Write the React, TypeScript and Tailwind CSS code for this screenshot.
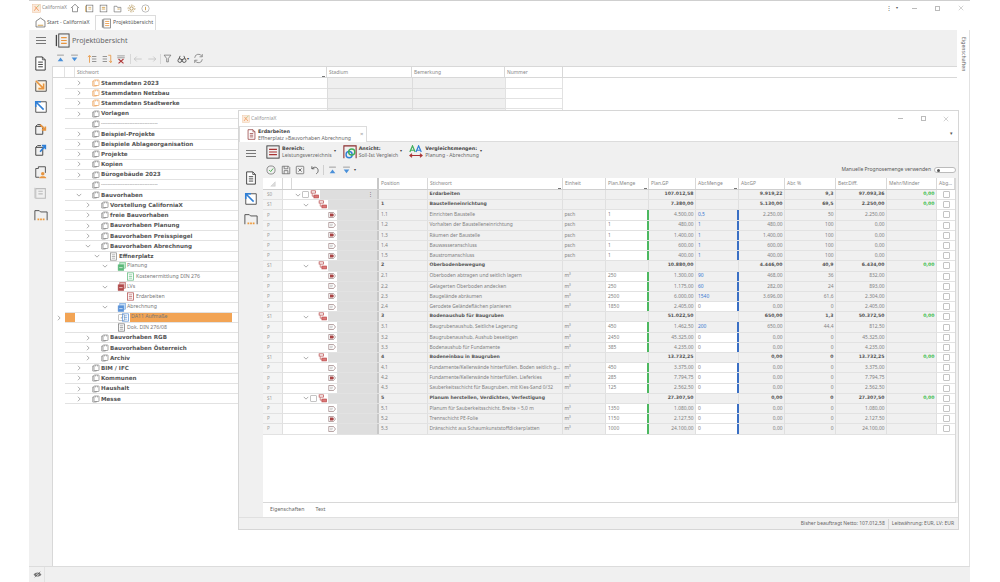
import React from "react";

type IP = { s?: number; h?: number; c?: string; f?: string };
const Svg = ({ s = 10, h, children, className }: { s?: number; h?: number; children: React.ReactNode; className?: string }) => (
  <svg width={s} height={h ?? s} viewBox="0 0 16 16" fill="none" className={"shrink-0 " + (className ?? "")}>{children}</svg>
);
const Logo = ({ s = 9 }: IP) => (
  <Svg s={s}><rect x="1" y="1" width="14" height="14" fill="#fbe9da" stroke="#eec7a6" /><path d="M4 12 L9 5 M5 4 L12 12" stroke="#ef9a5e" strokeWidth="1.6" /><path d="M9 5 L13 2" stroke="#8fc07a" strokeWidth="1.3" /></Svg>
);
const Chev = ({ down }: { down?: boolean }) => (
  <Svg s={6}>{down ? <path d="M2 5 L8 11 L14 5" stroke="#777" strokeWidth="1.6" /> : <path d="M5 2 L11 8 L5 14" stroke="#777" strokeWidth="1.6" />}</Svg>
);
const Folder = ({ c = "#888" }: IP) => (
  <Svg s={8}><rect x="4" y="2" width="10" height="11" rx="1" stroke={c} strokeWidth="1.5" /><path d="M4 4 H1.5 V14 H9 V13" stroke={c} strokeWidth="1.5" /><path d="M7 2 V5 M11 2 V5" stroke={c} strokeWidth="1.1" /></Svg>
);
const DocSmall = ({ c = "#888" }: IP) => (
  <Svg s={9}><rect x="2.5" y="1.5" width="11" height="13" stroke={c} strokeWidth="1.3" /><path d="M5 5 H11 M5 8 H11 M5 11 H11" stroke={c} strokeWidth="1.1" /></Svg>
);
const Stack = ({ c = "#5cb87a", l = "#c4ebcf" }: { c?: string; l?: string }) => (
  <Svg s={9}><rect x="5" y="1" width="10" height="10" fill={l} stroke={c} /><rect x="2" y="5" width="10" height="10" fill={c} stroke={c} /><path d="M4 10 H10" stroke="#fff" strokeWidth="1.2" /></Svg>
);
const PageDoc = ({ s = 15, c = "#333" }: IP) => (
  <Svg s={s}><path d="M3 1 H10 L13 4 V15 H3 Z" stroke={c} strokeWidth="1" fill="#fff" /><path d="M10 1 V4 H13" stroke={c} strokeWidth=".8" /><path d="M5.5 6.5 H10.5 M5.5 9 H10.5 M5.5 11.5 H10.5" stroke={c} strokeWidth="1" /></Svg>
);
const ArrowBox = ({ s = 15, dir, c }: { s?: number; dir: "in" | "out"; c: string }) => (
  <Svg s={s}>
    <path d="M4 2 H14 V14 H2 V4" stroke="#444" strokeWidth="1" fill={dir === "in" ? "#fdf3e3" : "#fff"} />
    {dir === "in" ? <path d="M2 2 L11 11 M11 5 V11 H5" stroke={c} strokeWidth="1.8" /> : <path d="M11 11 L2 2 M2 8 V2 H8" stroke={c} strokeWidth="1.8" />}
  </Svg>
);
const PlusFolder = ({ s = 15, up, c }: { s?: number; up?: boolean; c: string }) => (
  <Svg s={s}>
    <path d="M2 5 H10 V14 H2 Z M2 5 L4 3 H8" stroke="#444" strokeWidth="1.1" />
    {up ? <path d="M7 10 L13 3 M9 3 H13 V7" stroke={c} strokeWidth="1.8" /> : <path d="M7 3 L13 9 M13 5 V9 H9" stroke={c} strokeWidth="1.8" />}
  </Svg>
);
const DotFolder = ({ s = 15 }: IP) => (
  <Svg s={s}>
    <path d="M1 14 V3 H6 L7.5 4.5 H15 V14" stroke="#444" strokeWidth="1" />
    <path d="M4 13 H6 M7 13 H9 M10 13 H12" stroke="#ef9a3a" strokeWidth="2.2" />
  </Svg>
);
const Burger = () => (
  <div className="flex w-[10px] flex-col gap-[2px]">
    <div className="h-px bg-[#777]" /><div className="h-px bg-[#777]" /><div className="h-px bg-[#777]" />
  </div>
);
const Up = ({ flip }: { flip?: boolean }) => (
  <Svg s={9}>
    {flip ? <><path d="M2 2 H14" stroke="#888" strokeWidth="1.4" /><path d="M3 6 H13 L8 13 Z" fill="#4a90d9" /></> : <><path d="M2 2 H14" stroke="#888" strokeWidth="1.4" /><path d="M8 6 L13 13 H3 Z" fill="#4a90d9" /></>}
  </Svg>
);
const NodeIcon = () => (
  <Svg s={9}><rect x="2" y="1.5" width="8" height="4" stroke="#b84a4a" strokeWidth="1.3" /><path d="M4 6 V11 H7" stroke="#b84a4a" strokeWidth="1.1" /><rect x="7" y="9" width="8" height="5" stroke="#b84a4a" strokeWidth="1.3" fill="#d77" /></Svg>
);
const Tag = ({ filled }: { filled?: boolean }) => (
  <Svg s={8}><path d="M1.5 3 H11 L15 8 L11 13 H1.5 Z" stroke="#8a6a6a" strokeWidth="1.2" fill="#fff" />{filled ? <path d="M4 5 H10 L12 8 L10 11 H4 Z" fill="#a84242" /> : <path d="M4 6.5 H10 M4 9.5 H9" stroke="#aaa" strokeWidth="1.2" />}</Svg>
);
const Check = ({ on }: { on?: boolean }) => (
  <div className="flex h-[7px] w-[7px] shrink-0 items-center justify-center rounded-[1px] border border-[#c4c4c4] bg-white text-[5px] leading-none text-[#888]">{on ? "✓" : ""}</div>
);

type TR = { d: number; t: string; b?: boolean; chev?: "r" | "d"; icon?: "o" | "f" | "doc" | "g" | "gd" | "r" | "rd" | "bl" | "bd" | "k"; small?: boolean; sel?: boolean };
const tree: TR[] = [
  { d: 0, t: "Stammdaten 2023", b: true, chev: "r", icon: "o" },
  { d: 0, t: "Stammdaten Netzbau", b: true, chev: "r", icon: "o" },
  { d: 0, t: "Stammdaten Stadtwerke", b: true, chev: "r", icon: "o" },
  { d: 0, t: "Vorlagen", b: true, chev: "r", icon: "f" },
  { d: 0, t: "----------------------------------", icon: "f", small: true },
  { d: 0, t: "Beispiel-Projekte", b: true, chev: "r", icon: "f" },
  { d: 0, t: "Beispiele Ablageorganisation", b: true, chev: "r", icon: "f" },
  { d: 0, t: "Projekte", b: true, chev: "r", icon: "f" },
  { d: 0, t: "Kopien", b: true, chev: "r", icon: "f" },
  { d: 0, t: "Bürogebäude 2023", b: true, chev: "r", icon: "f" },
  { d: 0, t: "----------------------------------", icon: "f", small: true },
  { d: 0, t: "Bauvorhaben", b: true, chev: "d", icon: "f" },
  { d: 1, t: "Vorstellung CaliforniaX", b: true, chev: "r", icon: "f" },
  { d: 1, t: "freie Bauvorhaben", b: true, chev: "r", icon: "f" },
  { d: 1, t: "Bauvorhaben Planung", b: true, chev: "r", icon: "f" },
  { d: 1, t: "Bauvorhaben Preisspiegel", b: true, chev: "r", icon: "f" },
  { d: 1, t: "Bauvorhaben Abrechnung", b: true, chev: "d", icon: "f" },
  { d: 2, t: "Effnerplatz", b: true, chev: "d", icon: "doc" },
  { d: 3, t: "Planung", chev: "d", icon: "g", small: true },
  { d: 4, t: "Kostenermittlung DIN 276", icon: "gd", small: true },
  { d: 3, t: "LVs", chev: "d", icon: "r", small: true },
  { d: 4, t: "Erdarbeiten", icon: "rd", small: true },
  { d: 3, t: "Abrechnung", chev: "d", icon: "bl", small: true },
  { d: 4, t: "DA11 Aufmaße", icon: "bd", small: true, sel: true },
  { d: 3, t: "Dok. DIN 276/08", icon: "k", small: true },
  { d: 1, t: "Bauvorhaben RGB", b: true, chev: "r", icon: "f" },
  { d: 1, t: "Bauvorhaben Österreich", b: true, chev: "r", icon: "f" },
  { d: 1, t: "Archiv", b: true, chev: "r", icon: "f" },
  { d: 0, t: "BIM / IFC", b: true, chev: "r", icon: "f" },
  { d: 0, t: "Kommunen", b: true, chev: "r", icon: "f" },
  { d: 0, t: "Haushalt", b: true, chev: "r", icon: "f" },
  { d: 0, t: "Messe", b: true, chev: "r", icon: "f" },
];
const indents = ["pl-[1px]", "pl-[10px]", "pl-[19px]", "pl-[27px]", "pl-[36px]"];

const TreeIcon = ({ k }: { k?: TR["icon"] }) => {
  switch (k) {
    case "o": return <Folder c="#eca45e" />;
    case "f": return <Folder />;
    case "doc": return <DocSmall c="#888" />;
    case "g": return <Stack />;
    case "gd": return <DocSmall c="#5cb87a" />;
    case "r": return <Stack c="#b04a4a" l="#e6c0c0" />;
    case "rd": return <DocSmall c="#b04a4a" />;
    case "bl": return <Stack c="#5a92d8" l="#c4dcf4" />;
    case "bd": return <DocSmall c="#5a92d8" />;
    case "k": return <DocSmall c="#777" />;
    default: return null;
  }
};

const TreeRow = ({ r, i }: { r: TR; i: number }) => (
  <div className="flex h-[10.2px] w-[510px]">
    <div className="flex w-[12px] items-center justify-center">{r.sel ? <Chev /> : null}</div>
    <div className={"w-[10px] border-b border-[#e2e2e2] " + (r.sel ? "bg-[#f2a455]" : "")} />
    <div className={"flex w-[252px] items-center border-b border-[#e2e2e2] " + indents[r.d]}>
      <div className="flex w-[5px] shrink-0 justify-center">{r.chev ? <Chev down={r.chev === "d"} /> : null}</div>
      {r.sel ? <div className="ml-[1px] -mr-[5px] flex w-[8px] justify-end"><Check on /></div> : <div className="w-[9px]" />}
      <div className="ml-[1px] flex w-[9px] justify-center"><TreeIcon k={r.icon} /></div>
      <div className={"flex h-full items-center whitespace-nowrap pl-[1px] " + (r.sel ? "w-[102px] bg-[#f2a455] " : "") + (r.b ? "font-['DejaVu_Sans'] text-[5.6px] font-bold text-[#555]" : "text-[5.2px] text-[#777]")}>{r.t}</div>
    </div>
    <div className={"w-[85px] border-b border-l border-[#dcdcdc] " + (i < 4 ? "bg-[#efefef]" : "")} />
    <div className={"w-[93px] border-b border-l border-[#dcdcdc] " + (i < 4 ? "bg-[#efefef]" : "")} />
    <div className="w-[58px] border-b border-l border-r border-[#e2e2e2]" />
  </div>
);

type Row = { k: "S0" | "S1" | "P"; pos: string; t: string; e?: string; pm?: string; pg: string; am?: string; ag: string; ap: string; bd: string; mm?: string; f?: boolean; cb?: boolean };
const P = (pos: string, t: string, e: string, pm: string, pg: string, am: string, ag: string, ap: string, bd: string, f?: boolean): Row => ({ k: "P", pos, t, e, pm, pg, am, ag, ap, bd, f });
const S = (pos: string, t: string, pg: string, ag: string, ap: string, bd: string, cb?: boolean): Row => ({ k: "S1", pos, t, pg, ag, ap, bd, mm: "0,00", cb });
const rows: Row[] = [
  { k: "S0", pos: "", t: "Erdarbeiten", pg: "107.012,58", ag: "9.919,22", ap: "9,3", bd: "97.093,36", mm: "0,00", cb: true },
  S("1", "Baustelleneinrichtung", "7.380,00", "5.130,00", "69,5", "2.250,00"),
  P("1.1", "Einrichten Baustelle", "psch", "1", "4.500,00", "0,5", "2.250,00", "50", "2.250,00", true),
  P("1.2", "Vorhalten der Baustelleneinrichtung", "psch", "1", "480,00", "1", "480,00", "100", "0,00"),
  P("1.3", "Räumen der Baustelle", "psch", "1", "1.400,00", "1", "1.400,00", "100", "0,00", true),
  P("1.4", "Bauwasseranschluss", "psch", "1", "600,00", "1", "600,00", "100", "0,00"),
  P("1.5", "Baustromanschluss", "psch", "1", "400,00", "1", "400,00", "100", "0,00", true),
  S("2", "Oberbodenbewegung", "10.880,00", "4.446,00", "40,9", "6.434,00"),
  P("2.1", "Oberboden abtragen und seitlich lagern", "m³", "250", "1.300,00", "90", "468,00", "36", "832,00", true),
  P("2.2", "Gelagerten Oberboden andecken", "m³", "250", "1.175,00", "60", "282,00", "24", "893,00"),
  P("2.3", "Baugelände abräumen", "m³", "2500", "6.000,00", "1540", "3.696,00", "61,6", "2.304,00", true),
  P("2.4", "Gerodete Geländeflächen planieren", "m³", "1850", "2.405,00", "0", "0,00", "0", "2.405,00"),
  S("3", "Bodenaushub für Baugruben", "51.022,50", "650,00", "1,3", "50.372,50"),
  P("3.1", "Baugrubenaushub, Seitliche Lagerung", "m³", "450", "1.462,50", "200", "650,00", "44,4", "812,50"),
  P("3.2", "Baugrubenaushub, Aushub beseitigen", "m³", "2450", "45.325,00", "0", "0,00", "0", "45.325,00", true),
  P("3.3", "Bodenaushub für Fundamente", "m³", "385", "4.235,00", "0", "0,00", "0", "4.235,00"),
  S("4", "Bodeneinbau in Baugruben", "13.732,25", "0,00", "0", "13.732,25"),
  P("4.1", "Fundamente/Kellerwände hinterfüllen. Boden seitlich g...", "m³", "450", "3.375,00", "0", "0,00", "0", "3.375,00"),
  P("4.2", "Fundamente/Kellerwände hinterfüllen. Lieferkies", "m³", "285", "7.794,75", "0", "0,00", "0", "7.794,75", true),
  P("4.3", "Sauberkeitsschicht für Baugruben, mit Kies-Sand 0/32", "m³", "125", "2.562,50", "0", "0,00", "0", "2.562,50"),
  S("5", "Planum herstellen, Verdichten, Verfestigung", "27.307,50", "0,00", "0", "27.307,50", true),
  P("5.1", "Planum für Sauberkeitsschicht. Breite > 5,0 m", "m³", "1350", "1.080,00", "0", "0,00", "0", "1.080,00"),
  P("5.2", "Trennschicht PE-Folie", "m³", "1150", "2.127,50", "0", "0,00", "0", "2.127,50", true),
  P("5.3", "Dränschicht aus Schaumkunststoffdickerplatten", "m³", "1000", "24.100,00", "0", "0,00", "0", "24.100,00"),
];

const cellB = "flex items-center border-r border-[#e0e0e0] overflow-hidden whitespace-nowrap";
const boldT = "font-['DejaVu_Sans'] font-bold text-[4.6px] text-[#555]";
const normT = "text-[4.9px] text-[#808080]";

const GridRow = ({ r }: { r: Row }) => {
  const isP = r.k === "P";
  const t = isP ? normT : boldT;
  const white = isP && r.am === "0";
  return (
    <div className="flex h-[10.2px] border-b border-[#e2e2e2]">
      <div className="flex w-[20px] items-center border-r border-[#e0e0e0] bg-[#f4f4f4] pl-[4px] text-[4.6px] text-[#999]">{r.k === "P" ? "P" : r.k}</div>
      <div className="w-[9px] bg-white" />
      <div className="flex w-[87px] border-r-2 border-[#c8c8c8]">
        <div className={"flex items-center justify-end bg-white pr-[1px] " + (r.k === "S0" ? "w-[28px]" : r.k === "S1" ? "w-[36px]" : "w-[45px]")}>
          {isP ? <Tag filled={r.f} /> : (
            <div className="flex items-center gap-[1px]">
              <Chev down />
              {r.cb ? <Check /> : <div className="w-[7px]" />}
              <NodeIcon />
            </div>
          )}
        </div>
        <div className="flex flex-1 items-center justify-end bg-[#dedede] pr-[4px] text-[5px] leading-none text-[#666]">{r.k === "S0" ? "⋮" : ""}</div>
      </div>
      <div className={"w-[49px] bg-[#f0f0f0] pl-[2px] " + cellB + " " + (isP ? "text-[4.9px] text-[#808080]" : boldT)}>{r.pos}</div>
      <div className={"w-[135px] bg-[#f0f0f0] pl-[1.5px] " + cellB + " " + t}>{r.t}</div>
      <div className={"w-[43px] bg-[#f0f0f0] pl-[1.5px] " + cellB + " text-[4.9px] text-[#808080]"}>{r.e}</div>
      <div className={"w-[43px] pl-[2px] " + cellB + " text-[4.9px] text-[#808080] " + (isP ? "border-r-2 border-r-[#4cb860] bg-white" : "bg-[#f0f0f0]")}>{r.pm}</div>
      <div className={"w-[47px] justify-end bg-[#f0f0f0] pr-[1.5px] " + cellB + " " + t}>{r.pg}</div>
      <div className={"w-[43px] pl-[2px] " + cellB + " text-[4.9px] " + (isP ? "border-r-2 border-r-[#3a6fc4] " : "") + (white ? "bg-white text-[#808080]" : "bg-[#f0f0f0] text-[#3a78d0]")}>{r.am}</div>
      <div className={"w-[46px] justify-end bg-[#f0f0f0] pr-[1.5px] " + cellB + " " + t}>{r.ag}</div>
      <div className={"w-[51px] justify-end bg-[#f0f0f0] pr-[1.5px] " + cellB + " " + t}>{r.ap}</div>
      <div className={"w-[51px] justify-end bg-[#f0f0f0] pr-[1.5px] " + cellB + " " + t}>{r.bd}</div>
      <div className={"w-[50px] justify-end bg-[#f0f0f0] pr-[1.5px] " + cellB + " font-['DejaVu_Sans'] text-[4.6px] font-bold text-[#3fbf4f]"}>{r.mm}</div>
      <div className="flex w-[18px] items-center justify-center bg-white"><Check /></div>
    </div>
  );
};

const Hd = ({ w, t, mark }: { w: string; t: string; mark?: boolean }) => (
  <div className={"relative flex h-full items-center border-r border-[#d8d8d8] pl-[2px] text-[4.9px] text-[#888] " + w}>
    {t}
    {mark ? <span className="absolute bottom-0 right-[1px] h-px w-[3px] bg-[#777]" /> : null}
  </div>
);

const WinControls = () => (
  <div className="flex items-center">
    <div className="h-px w-[5px] bg-[#bbb]" />
    <div className="ml-[18px] h-[5px] w-[5px] border border-[#bbb]" />
    <Svg s={6} className="ml-[17px]"><path d="M2 2 L14 14 M14 2 L2 14" stroke="#aaa" strokeWidth="1.4" /></Svg>
  </div>
);

const TbIcon = ({ children }: { children: React.ReactNode }) => <div className="flex w-[14.5px] shrink-0 justify-center">{children}</div>;

const FloatingWindow = () => (
  <div className="absolute left-[209px] top-[110px] flex h-[420px] w-[721px] flex-col border border-[#d6d6d6] bg-white">
    <div className="flex h-[15px] shrink-0 items-center pl-[3px] pr-[9px]">
      <Logo s={8} />
      <span className="ml-[1px] text-[5px] text-[#999]">CaliforniaX</span>
      <div className="ml-auto"><WinControls /></div>
    </div>
    <div className="flex h-[16px] shrink-0 border-b border-[#dcdcdc]">
      <div className="flex h-[16px] w-[128px] items-center border border-b-0 border-[#dcdcdc] bg-white pl-[6px]">
        <PageDoc s={11} c="#8a2b2b" />
        <div className="ml-[1px] leading-[6px]">
          <div className="font-['DejaVu_Sans'] text-[4.8px] font-bold text-[#444]">Erdarbeiten</div>
          <div className="text-[5.1px] text-[#666]">Effnerplatz »Bauvorhaben Abrechnung</div>
        </div>
        <span className="ml-[9px] text-[6px] text-[#999]">×</span>
      </div>
      <div className="ml-auto self-center pr-[5px] text-[5px] leading-none text-[#555]">▾</div>
    </div>
    <div className="flex min-h-0 flex-1 bg-[#f0f0f0]">
      <div className="flex w-[24px] shrink-0 flex-col items-center pt-[8px]">
        <Burger />
        <div className="mt-[14px] flex flex-col items-center gap-[6.5px]">
          <PageDoc s={14} />
          <ArrowBox s={14} dir="out" c="#2f7fd6" />
          <DotFolder s={14} />
        </div>
      </div>
      <div className="flex min-w-0 flex-1 flex-col">
        <div className="flex h-[20px] shrink-0 items-center pl-[3px]">
          <Svg s={14}><rect x="1" y="1" width="14" height="14" stroke="#333" strokeWidth="1" /><path d="M3.5 5 H12.5 M3.5 8 H12.5 M3.5 11 H12.5" stroke="#a83232" strokeWidth="1.3" /></Svg>
          <div className="ml-[2px] leading-[6px]">
            <div className="font-['DejaVu_Sans'] text-[4.8px] font-bold text-[#444]">Bereich:</div>
            <div className="text-[5.1px] text-[#666]">Leistungsverzeichnis</div>
          </div>
          <span className="ml-[2px] -mt-[3px] text-[4px] text-[#444]">▾</span>
          <div className="ml-[7px]">
            <Svg s={14}><path d="M1 15 V1 H15 V15" stroke="#8a2b2b" strokeWidth="1.2" /><circle cx="7" cy="11" r="3.5" stroke="#2f7fd6" strokeWidth="1.6" /><circle cx="10" cy="8" r="3.5" stroke="#3fae5a" strokeWidth="1.6" /></Svg>
          </div>
          <div className="ml-[2px] leading-[6px]">
            <div className="font-['DejaVu_Sans'] text-[4.8px] font-bold text-[#444]">Ansicht:</div>
            <div className="text-[5.1px] text-[#666]">Soll-Ist Vergleich</div>
          </div>
          <span className="ml-[2px] -mt-[3px] text-[4px] text-[#444]">▾</span>
          <div className="ml-[7px]">
            <Svg s={14}><path d="M1 8 L4 1 L7 8 M2 6 H6" stroke="#3fae5a" strokeWidth="1.4" /><path d="M8 8 L11 1 L14 8 M9 6 H13" stroke="#2f7fd6" strokeWidth="1.4" /><path d="M1 12 H15 M3.5 10 L1 12 L3.5 14 M12.5 10 L15 12 L12.5 14" stroke="#a83232" strokeWidth="1.2" /></Svg>
          </div>
          <div className="ml-[2px] leading-[6px]">
            <div className="font-['DejaVu_Sans'] text-[4.8px] font-bold text-[#444]">Vergleichsmengen:</div>
            <div className="text-[5.1px] text-[#666]">Planung - Abrechnung</div>
          </div>
          <span className="ml-[1px] -mt-[3px] text-[4px] text-[#444]">▾</span>
        </div>
        <div className="flex h-[16px] shrink-0 items-center pl-[1px] pr-[2px]">
          <TbIcon><Svg s={10}><circle cx="8" cy="8" r="6.5" stroke="#777" strokeWidth="1.3" /><path d="M5 8 L7.5 10.5 L11.5 5.5" stroke="#4caf50" strokeWidth="1.5" /></Svg></TbIcon>
          <TbIcon><Svg s={10}><path d="M2 2 H12 L14 4 V14 H2 Z M5 2 V6 H11 V2 M5 14 V9 H11 V14" stroke="#666" strokeWidth="1.2" /></Svg></TbIcon>
          <TbIcon><Svg s={10}><rect x="2" y="2" width="12" height="12" rx="1" stroke="#666" strokeWidth="1.2" /><path d="M5.5 5.5 L10.5 10.5 M10.5 5.5 L5.5 10.5" stroke="#555" strokeWidth="1.3" /></Svg></TbIcon>
          <TbIcon><Svg s={10}><path d="M3 6 C6 2 13 3 13 9 C13 11 12 13 10 14 M3 2 V6 H7" stroke="#555" strokeWidth="1.4" /></Svg></TbIcon>
          <div className="mx-[1px] h-[10px] w-px bg-[#cfcfcf]" />
          <TbIcon><Up /></TbIcon>
          <TbIcon><Up flip /></TbIcon>
          <span className="text-[4px] text-[#444]">▾</span>
          <div className="ml-auto flex items-center">
            <span className="text-[5px] text-[#555]">Manuelle Prognosemenge verwenden</span>
            <div className="ml-[3px] flex h-[6px] w-[22px] items-center rounded-full border border-[#bbb] bg-white pl-[2px]"><div className="h-[3px] w-[3px] rounded-full bg-[#555]" /></div>
          </div>
        </div>
        <div className="mr-[2px] min-h-0 flex-1 border-r border-b border-[#d8d8d8] bg-white">
          <div className="flex h-[12px] border-b border-[#cfcfcf] bg-white">
            <div className="flex h-full w-[20px] items-center justify-center border-r border-[#d8d8d8]"><Svg s={6}><path d="M14 2 V14 H2 Z" fill="#ddd" stroke="#bbb" /></Svg></div>
            <div className="h-full w-[9px] border-r border-[#d8d8d8]" />
            <div className="h-full w-[87px] border-r-2 border-[#c8c8c8]" />
            <Hd w="w-[49px]" t="Position" />
            <Hd w="w-[135px]" t="Stichwort" mark />
            <Hd w="w-[43px]" t="Einheit" />
            <Hd w="w-[43px]" t="Plan.Menge" mark />
            <Hd w="w-[47px]" t="Plan.GP" />
            <Hd w="w-[43px]" t="Abr.Menge" mark />
            <Hd w="w-[46px]" t="Abr.GP" />
            <Hd w="w-[51px]" t="Abr. %" />
            <Hd w="w-[51px]" t="Betr.Diff." />
            <Hd w="w-[50px]" t="Mehr/Minder" />
            <Hd w="w-[18px]" t="Abg..." />
          </div>
          {rows.map((r, i) => <GridRow key={i} r={r} />)}
        </div>
        <div className="flex h-[14px] shrink-0 items-center bg-white pl-[7px] text-[5.2px] text-[#666]">
          <span>Eigenschaften</span>
          <span className="ml-[11px]">Text</span>
        </div>
      </div>
    </div>
    <div className="flex h-[12px] shrink-0 items-center justify-end border-t border-[#e0e0e0] bg-[#f0f0f0] pr-[4px] text-[5px] text-[#666]">
      <span>Bisher beauftragt Netto: 107.012,58</span>
      <div className="mx-[3px] h-[10px] w-px bg-[#d8d8d8]" />
      <span>Leitwährung: EUR, LV: EUR</span>
    </div>
  </div>
);

export default function App() {
  return (
    <div className="flex h-[582px] w-[1000px] overflow-hidden bg-white pl-[29px] pr-[30px] font-['Noto_Sans',sans-serif]">
      <div className="relative flex w-[941px] flex-col">
        <div className="h-px shrink-0 bg-[#cfcfcf]" />
        <div className="flex h-[14px] shrink-0 items-center pl-[3px] pr-[6px]">
          <Logo s={9} />
          <span className="ml-[1px] w-[28px] text-[4.9px] text-[#888]">CaliforniaX</span>
          <div className="flex items-center gap-[5px]">
            <Svg s={10}><path d="M1.5 8 L8 2 L14.5 8 M4 7 V14 H12 V7" stroke="#666" strokeWidth="1.1" /></Svg>
            <Svg s={9}><rect x="3" y="2" width="11" height="12" stroke="#666" strokeWidth="1.1" /><path d="M1 3 V14 M6 6 H11 M6 9 H11" stroke="#c8902f" strokeWidth="1.1" /></Svg>
            <Svg s={9}><rect x="2" y="2" width="12" height="12" stroke="#666" strokeWidth="1.1" /><path d="M5 6 H11 M5 9 H11" stroke="#c8902f" strokeWidth="1.3" /></Svg>
            <Svg s={9}><path d="M2 14 V4 H7 L8 6 H14 V14 Z" stroke="#666" strokeWidth="1.1" /><path d="M8 9 H12" stroke="#c8902f" strokeWidth="1.3" /></Svg>
            <Svg s={9}><circle cx="8" cy="8" r="3" stroke="#a8843f" strokeWidth="1.4" /><circle cx="8" cy="8" r="6" stroke="#a8843f" strokeWidth="1.4" strokeDasharray="2.5 2" /></Svg>
            <Svg s={9}><circle cx="8" cy="8" r="6.5" stroke="#999" strokeWidth="1.1" /><path d="M8 5 V11" stroke="#c8902f" strokeWidth="1.4" /></Svg>
          </div>
          <div className="ml-auto flex items-center">
            <span className="text-[6px] leading-none text-[#555]">⋮</span>
            <span className="ml-[4px] text-[4px] text-[#555]">▾</span>
            <div className="ml-[14px] h-px w-[5px] bg-[#bbb]" />
            <div className="ml-[18px] h-[5px] w-[5px] border border-[#bbb]" />
            <Svg s={6} className="ml-[18px]"><path d="M2 2 L14 14 M14 2 L2 14" stroke="#aaa" strokeWidth="1.4" /></Svg>
          </div>
        </div>
        <div className="flex h-[15px] shrink-0 items-end pl-[6px]">
          <div className="flex h-[15px] w-[60px] items-center">
            <Svg s={11}><path d="M1.5 6 L8 1.5 L14.5 6 V14.5 H1.5 Z" stroke="#555" strokeWidth="1" /><path d="M4 12 H12" stroke="#c8902f" strokeWidth="1.2" /></Svg>
            <span className="ml-[1px] text-[5.2px] text-[#555]">Start - CaliforniaX</span>
          </div>
          <div className="flex h-[15px] w-[61px] items-center border border-b-0 border-[#dcdcdc] bg-white pl-[5px]">
            <Svg s={11}><rect x="4" y="1.5" width="10" height="13" stroke="#666" strokeWidth="1" /><path d="M2 2 V14" stroke="#666" strokeWidth="1.2" /><path d="M6 5 H12 M6 8 H12 M6 11 H12" stroke="#e8953f" strokeWidth="1.2" /></Svg>
            <span className="ml-[1px] text-[5.2px] text-[#555]">Projektübersicht</span>
          </div>
        </div>
        <div className="flex min-h-0 flex-1">
          <div className="flex min-w-0 flex-1 flex-col bg-[#f0f0f0]">
            <div className="flex h-[21px] shrink-0 items-center pl-[7px]">
              <Burger />
              <div className="ml-[9px]">
                <Svg s={15}><rect x="4" y="1" width="11" height="14" stroke="#444" strokeWidth="1" /><path d="M1.5 2 V14" stroke="#444" strokeWidth="1.4" /><path d="M6.5 5 H12.5 M6.5 8 H12.5 M6.5 11 H12.5" stroke="#e8953f" strokeWidth="1.3" /></Svg>
              </div>
              <span className="ml-[2px] text-[7.2px] text-[#666]">Projektübersicht</span>
            </div>
            <div className="flex min-h-0 flex-1">
              <div className="flex w-[23px] shrink-0 flex-col items-center gap-[7.5px] pt-[5px]">
                <PageDoc s={15} />
                <ArrowBox dir="in" c="#e8953f" s={14} />
                <ArrowBox dir="out" c="#2f7fd6" s={14} />
                <PlusFolder c="#e8953f" s={14} />
                <PlusFolder c="#2f7fd6" up s={14} />
                <Svg s={14}><path d="M2 14 V4 H5 V2 H13 V9" stroke="#444" strokeWidth="1" /><circle cx="10" cy="10" r="2" fill="#e8953f" /><path d="M6 15 C6 12 14 12 14 15 Z" fill="#e8953f" /><path d="M2 14 H6" stroke="#444" /></Svg>
                <Svg s={14}><path d="M2 14 V3 H13 V14 Z M5 6 H10 M5 9 H10" stroke="#bbb" strokeWidth="1.2" /><path d="M1 2 V14" stroke="#ccc" strokeWidth="1.3" /></Svg>
                <DotFolder s={14} />
              </div>
              <div className="flex min-w-0 flex-1 flex-col">
                <div className="flex h-[15px] shrink-0 items-center pl-[1px]">
                  <TbIcon><Up /></TbIcon>
                  <TbIcon><Up flip /></TbIcon>
                  <div className="w-[3px]" />
                  <TbIcon><Svg s={10}><path d="M4 14 V3 M1.5 5 L4 2 L6.5 5" stroke="#e8953f" strokeWidth="1.3" /><path d="M8 4 H15 M8 8 H15 M8 12 H15" stroke="#777" strokeWidth="1.2" /></Svg></TbIcon>
                  <TbIcon><Svg s={10}><path d="M1 4 H8 M1 8 H8 M1 12 H8" stroke="#777" strokeWidth="1.2" /><path d="M10 2 H14 V13 M11.5 11 L14 14 L16 11" stroke="#e8953f" strokeWidth="1.3" /></Svg></TbIcon>
                  <TbIcon><Svg s={10}><path d="M2 3 H14 M2 6 H14" stroke="#888" strokeWidth="1.2" /><path d="M4 8 L12 15 M12 8 L4 15" stroke="#b03a3a" strokeWidth="1.8" /></Svg></TbIcon>
                  <div className="ml-[1px] h-[10px] w-px bg-[#d8d8d8]" />
                  <TbIcon><Svg s={10}><path d="M14 8 H2 M6 4 L2 8 L6 12" stroke="#bbb" strokeWidth="1.1" /></Svg></TbIcon>
                  <TbIcon><Svg s={10}><path d="M2 8 H14 M10 4 L14 8 L10 12" stroke="#bbb" strokeWidth="1.1" /></Svg></TbIcon>
                  <div className="h-[10px] w-px bg-[#d8d8d8]" />
                  <TbIcon><Svg s={9}><path d="M2 2 H14 L9.5 8 V14 H6.5 V8 Z" stroke="#666" strokeWidth="1.2" /></Svg></TbIcon>
                  <div className="flex w-[16px] items-center justify-center">
                    <Svg s={10}><circle cx="4.5" cy="10.5" r="3" stroke="#555" strokeWidth="1.5" /><circle cx="11.5" cy="10.5" r="3" stroke="#555" strokeWidth="1.5" /><path d="M3 8 L5 3 M13 8 L11 3 M6 9 H10" stroke="#555" strokeWidth="1.5" /></Svg>
                    <span className="text-[4px] text-[#444]">▾</span>
                  </div>
                  <TbIcon><Svg s={11}><path d="M2.5 7 A5.5 5.5 0 0 1 13 5 M13.5 9 A5.5 5.5 0 0 1 3 11 M13.5 1.5 V5.5 H9.5 M2.5 14.5 V10.5 H6.5" stroke="#777" strokeWidth="1.1" /></Svg></TbIcon>
                </div>
                <div className="min-h-0 flex-1 border-l border-t border-[#d8d8d8] bg-white">
                  <div className="flex h-[11.4px] w-full border-b border-[#d8d8d8]">
                    <div className="h-full w-[12px] border-r border-[#e2e2e2]" />
                    <div className="h-full w-[10px] border-r border-[#e2e2e2]" />
                    <Hd w="w-[252px]" t="Stichwort" mark />
                    <Hd w="w-[85px]" t="Stadium" />
                    <Hd w="w-[93px]" t="Bemerkung" />
                    <Hd w="w-[58px]" t="Nummer" />
                  </div>
                  {tree.map((r, i) => <TreeRow key={i} r={r} i={i} />)}
                </div>
              </div>
            </div>
          </div>
          <div className="flex w-[13px] shrink-0 justify-center border-r border-[#e2e2e2] bg-white pt-[7px]">
            <span className="text-[5.2px] leading-none text-[#666] [writing-mode:vertical-rl]">Eigenschaften</span>
          </div>
        </div>
        <div className="flex h-[16px] shrink-0 items-center border-t border-[#dcdcdc] bg-[#f0f0f0] pl-[4px]">
          <Svg s={9}><path d="M1 8 C4 3 12 3 15 8 C12 13 4 13 1 8 Z" fill="#777" /><circle cx="8" cy="8" r="2" fill="#eee" /><path d="M3 13 L13 3" stroke="#444" strokeWidth="1" /></Svg>
          <div className="ml-[2px] h-full w-px bg-[#e2e2e2]" />
        </div>
        <FloatingWindow />
      </div>
    </div>
  );
}
